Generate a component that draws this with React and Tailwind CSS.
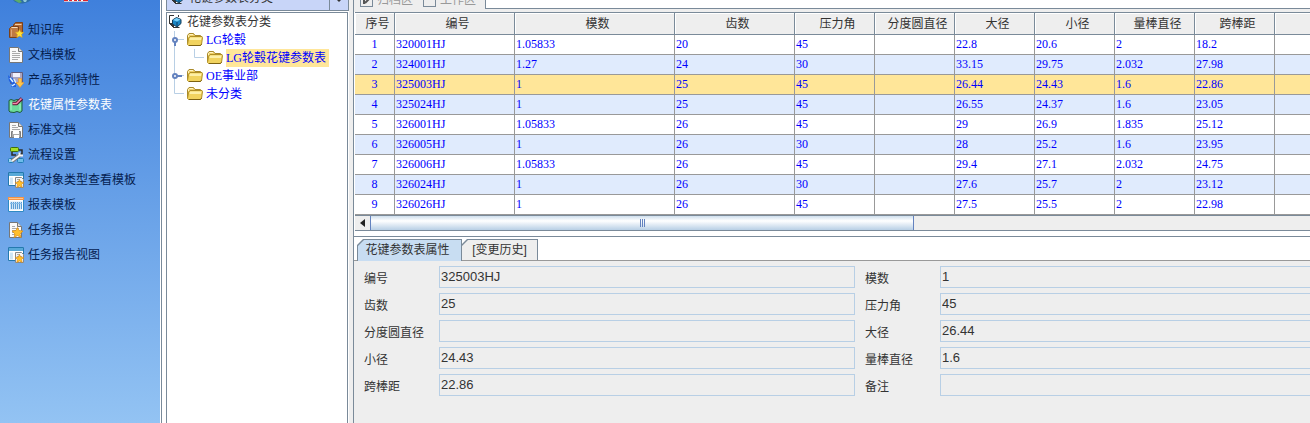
import { clsx } from 'clsx'

const columns = [
  { key: 'no', label: '序号', width: 'w-10' },
  { key: 'code', label: '编号', width: 'w-[120px]' },
  { key: 'module', label: '模数', width: 'w-40' },
  { key: 'teeth', label: '齿数', width: 'w-[120px]' },
  { key: 'angle', label: '压力角', width: 'w-20' },
  { key: 'pitch', label: '分度圆直径', width: 'w-20' },
  { key: 'major', label: '大径', width: 'w-20' },
  { key: 'minor', label: '小径', width: 'w-20' },
  { key: 'pin', label: '量棒直径', width: 'w-20' },
  { key: 'span', label: '跨棒距', width: 'w-20' },
]

const rows = [
  ['1', '320001HJ', '1.05833', '20', '45', '', '22.8', '20.6', '2', '18.2'],
  ['2', '324001HJ', '1.27', '24', '30', '', '33.15', '29.75', '2.032', '27.98'],
  ['3', '325003HJ', '1', '25', '45', '', '26.44', '24.43', '1.6', '22.86'],
  ['4', '325024HJ', '1', '25', '45', '', '26.55', '24.37', '1.6', '23.05'],
  ['5', '326001HJ', '1.05833', '26', '45', '', '29', '26.9', '1.835', '25.12'],
  ['6', '326005HJ', '1', '26', '30', '', '28', '25.2', '1.6', '23.95'],
  ['7', '326006HJ', '1.05833', '26', '45', '', '29.4', '27.1', '2.032', '24.75'],
  ['8', '326024HJ', '1', '26', '30', '', '27.6', '25.7', '2', '23.12'],
  ['9', '326026HJ', '1', '26', '45', '', '27.5', '25.5', '2', '22.98'],
]

const fields = [
  ['编号', '325003HJ'],
  ['模数', '1'],
  ['齿数', '25'],
  ['压力角', '45'],
  ['分度圆直径', ''],
  ['大径', '26.44'],
  ['小径', '24.43'],
  ['量棒直径', '1.6'],
  ['跨棒距', '22.86'],
  ['备注', ''],
]

const starPath = 'M11.5 7.5l1.300 2.600 2.900.300-2.100 2 .600 3-2.700-1.400-2.700 1.400.600-3-2.100-2 2.900-.300z'

function Svg({ children }) {
  return (
    <svg width="16" height="16" viewBox="0 0 16 16" className="shrink-0" aria-hidden="true">
      {children}
    </svg>
  )
}

function BooksIcon() {
  return (
    <Svg>
      <path d="M5.500 3l2-2.500h7V11l-1.500 2H5.500z" fill="#b56a35" stroke="#7c4119" />
      <path d="M7 2.500h6.500" stroke="#f0cfa6" />
      <path d="M1.500 6.500l2-2h7v8.500l-1.500 2.500H1.500z" fill="#c07a42" stroke="#7c4119" />
      <path d="M3.500 5.500h6" stroke="#f6dcbc" />
      <path d="M3.500 7.500v7" stroke="#dfa676" />
      <path d={starPath} fill="#ffe03c" stroke="#dca31b" strokeWidth=".6" />
    </Svg>
  )
}

function PageIcon() {
  return (
    <Svg>
      <path d="M1.500 .5h9l4 4v11h-13z" fill="#fafafa" stroke="#777" />
      <path d="M10.500 .5v4h4" fill="#ddd" stroke="#777" />
      <path d="M4 4.500h4M4 6.500h8M4 8.500h8M4 10.500h8M4 12.500h6" stroke="#aaa" />
    </Svg>
  )
}

function ProductIcon() {
  return (
    <Svg>
      <path d="M2.500 1.500l1-1h11v10l-1 1h-11z" fill="#a9a5c2" stroke="#615d7d" />
      <path d="M5 1h7v4H5z" fill="#f2f0fa" />
      <path d="M0 3l3 3 1-1 4 7v3H3l2-2-4-4z" fill="#1f5fe0" />
      <path d="M2 6l3 4M6 7l2 4M4 14l3-2" stroke="#d9efff" strokeWidth="1.500" />
      <path d="M10.500 6.500h3v4H16l-4 5-4-5h2.500z" fill="#ffc64a" stroke="#e8952b" strokeWidth=".6" />
    </Svg>
  )
}

function SplineIcon() {
  return (
    <Svg>
      <path d="M1 3.500l2-1 3 1 3-1 3 1 2-.5v11l-2 1.500-3-1-3 1-4-.5-1-1z" fill="#6bdc9a" stroke="#1d5b3b" />
      <path d="M3 5v8M12 7v6" stroke="#a5f3c4" />
      <path d="M4.500 6.500h4l5.500-5" stroke="#5a1030" strokeWidth="3.500" fill="none" />
      <path d="M4.500 6.500h4l5-5" stroke="#f58cab" strokeWidth="1.500" fill="none" />
    </Svg>
  )
}

function SavedPageIcon() {
  return (
    <Svg>
      <path d="M1.500 .5h9l4 4v11h-13z" fill="#fafafa" stroke="#777" />
      <path d="M10.500 .5v4h4" fill="#ddd" stroke="#777" />
      <path d="M4 3.500h4M4 5.500h6M4 7.500h8" stroke="#aaa" />
      <path d="M3.500 9.500h9v6h-9z" fill="#a9a9a9" stroke="#7d7d7d" />
      <path d="M5 9h6v3H5zM6 13h5v3H6z" fill="#fff" />
    </Svg>
  )
}

function FlowIcon() {
  return (
    <Svg>
      <path d="M11 3h3v4h-3M4 5v3h4" stroke="#2b2b2b" strokeWidth="1.500" fill="none" />
      <rect x="2.500" y=".5" width="8" height="4" rx="1" fill="#a6df28" stroke="#3f6f0c" />
      <rect x=".5" y="11.500" width="5" height="4" rx="1" fill="#9fd6f5" stroke="#227fb6" />
      <rect x="9.500" y="11.500" width="6" height="4" rx="1" fill="#6dbceb" stroke="#227fb6" />
      <path d="M4 14L12 8" stroke="#777" strokeWidth="4" />
      <path d="M4 14L12 8M11.500 5.500v3h3.500" stroke="#f5f5f5" strokeWidth="2" fill="none" />
    </Svg>
  )
}

function ViewIcon() {
  return (
    <Svg>
      <path d="M.5 .5h15v13H.5z" fill="#fff" stroke="#2479ae" />
      <path d="M1 1h14v3H1z" fill="#58a9d8" />
      <path d="M2 5.500h3v7H2z" fill="#cfe6f5" />
      <path d="M7.500 5.500h6l2 2v8h-8z" fill="#f6f6f6" stroke="#888" />
      <path d="M9 7.500h3M9 9.500h5" stroke="#aaa" />
      <path d={starPath} fill="#ffbf2d" stroke="#dd8b10" strokeWidth=".6" />
    </Svg>
  )
}

function ReportTemplateIcon() {
  return (
    <Svg>
      <path d="M.5 .5h15v14H.5z" fill="#fff" stroke="#2f8ac4" />
      <path d="M0 0h16v3H0z" fill="#f59445" />
      <path d="M1 1.500h14" stroke="#ffc78f" />
      <path d="M2 4.500h12v8H2z" fill="#cfe5f6" />
      <path d="M3.500 5v7M5.500 5v7M7.500 5v7M9.500 5v7M11.500 5v7M13.500 5v7" stroke="#5a9dd5" />
      <path d="M2 6.500h12" stroke="#86bce6" />
    </Svg>
  )
}

function TaskReportIcon() {
  return (
    <Svg>
      <path d="M1.500 .5h8l4 4v11h-12z" fill="#fafafa" stroke="#777" />
      <path d="M9.500 .5v4h4" fill="#ddd" stroke="#777" />
      <path d="M4 4.500h3M4 6.500h7M4 8.500h4M4 10.500h3M4 12.500h3" stroke="#aaa" />
      <path d="M9.500 5.500l1.500 3 4 .5-3 3 1 3.500-3.500-2-3.500 2 1-3.500-3-3 4-.5z" fill="#ffbf2d" stroke="#dd8b10" strokeWidth=".7" />
    </Svg>
  )
}

function RootIcon() {
  return (
    <Svg>
      <path d="M7 1.500H2.500v8l4 4h6" fill="none" stroke="#333" />
      <path d="M3 2h9v11H7L3 9z" fill="#fff" />
      <path d="M2.500 9.500h4v4zM11.500 1v2" fill="#333" stroke="#333" />
      <path d="M5.500 6l4-2.500L14 5.500v4L10 13l-4.500-3z" fill="#1b86c4" stroke="#153a55" />
      <path d="M6 6l3.500-2 4 1.500L10 7.500z" fill="#7ad2fa" />
      <path d="M10 8v4" stroke="#0c3f66" />
    </Svg>
  )
}

function FolderIcon() {
  return (
    <Svg>
      <path d="M.5 11.500V3.500L2 1.500h4.500l1.500 2h5.500v3" fill="#f0d06a" stroke="#a98a2c" />
      <path d="M1.500 5V3.500l1-1H6" fill="none" stroke="#fff5c4" />
      <path d="M.5 12.500l1-6 1.500-2h12l.5 1-1 7-1 1h-12z" fill="#f1d35f" stroke="#b08f26" />
      <path d="M3 5.500h11.500l-.5 2.500H2.500z" fill="#fdf0a8" />
      <path d="M2 13.500h11.500l1-1.500" fill="none" stroke="#7d6212" />
    </Svg>
  )
}

const menu = [
  { label: '知识库', icon: BooksIcon },
  { label: '文档模板', icon: PageIcon },
  { label: '产品系列特性', icon: ProductIcon },
  { label: '花键属性参数表', icon: SplineIcon, active: true },
  { label: '标准文档', icon: SavedPageIcon },
  { label: '流程设置', icon: FlowIcon },
  { label: '按对象类型查看模板', icon: ViewIcon },
  { label: '报表模板', icon: ReportTemplateIcon },
  { label: '任务报告', icon: TaskReportIcon },
  { label: '任务报告视图', icon: ViewIcon },
]

function Sidebar() {
  return (
    <nav className="w-40 shrink-0 bg-linear-to-b from-[#3f80dc] to-[#93c3f3]">
      <div className="flex h-[17px] gap-[33px] pl-[13px]">
        <svg width="18" height="4" aria-hidden="true">
          <path d="M0 0h18l-3 2-5 1.500H7L2 2z" fill="#2d6fa8" />
          <path d="M1 0h6l2 2-3 1z" fill="#5cab6a" />
          <path d="M10 0h4l-1 2h-2z" fill="#8fc8d8" />
        </svg>
        <svg width="24" height="2" aria-hidden="true">
          <path d="M0 0h24v1H0z" fill="#e0242c" />
          <path d="M0 1h24v1H0z" fill="#c9c3d4" />
          <path d="M4 .5h1M8 .5h2M13 .5h1M17 .5h2" stroke="#fff" />
          <path d="M5 .5h1M14 .5h1" stroke="#2c6ab0" />
        </svg>
      </div>
      <ul>
        {menu.map(({ label, icon: Icon, active }) => (
          <li key={label}>
            <a
              href="#"
              className={clsx('flex h-[25px] items-center gap-1 pl-2 text-xs', active ? 'text-white' : 'text-[#04204f]')}
            >
              <Icon />
              <span className="pt-px">{label}</span>
            </a>
          </li>
        ))}
      </ul>
    </nav>
  )
}

function TreeLines({ kind }) {
  return (
    <svg width="20" height="18" className="shrink-0" aria-hidden="true">
      <path d={kind === 'last' ? 'M7.500 0v8.500H17' : 'M7.500 0v18M7.500 8.500H17'} fill="none" stroke="#b8cfe5" />
      {kind === 'open' && <path d="M8 9v6" stroke="#6382bf" strokeWidth="2" />}
      {kind === 'closed' && <path d="M8 9h7" stroke="#6382bf" strokeWidth="2" />}
      {kind !== 'last' && <circle cx="8" cy="9" r="2" fill="#fff" stroke="#6382bf" strokeWidth="2" />}
    </svg>
  )
}

function TreeNode({ kind, label, nested, selected }) {
  return (
    <li className="flex h-[18px] items-center">
      {nested && (
        <svg width="20" height="18" className="shrink-0" aria-hidden="true">
          <path d="M7.500 0v18" stroke="#b8cfe5" />
        </svg>
      )}
      <TreeLines kind={kind} />
      <FolderIcon />
      <span className={clsx('ml-[3px] pr-[3px] text-[#0000ff]', selected && 'bg-[#ffe699]')}>{label}</span>
    </li>
  )
}

function CategoryTree() {
  return (
    <section className="flex w-[183px] shrink-0 flex-col">
      <div className="flex h-[11px] items-end overflow-hidden border-x border-b border-[#7a8a99] bg-[#c8d5f8] text-xs leading-6 text-[#333]">
        <div className="flex grow items-center gap-1 pl-[2px]">
          <RootIcon />
          花键参数表分类
        </div>
        <div className="flex h-6 w-[19px] items-center justify-center border-l border-[#7a8a99]">
          <svg width="8" height="8" aria-hidden="true">
            <path d="M0 4h8L4 8z" fill="#333" />
          </svg>
        </div>
      </div>
      <div className="mt-px mr-px grow border border-b-0 border-[#7a8a99] bg-white font-['Liberation_Serif','Noto_Sans_CJK_SC',serif] text-xs leading-[18px]">
        <div className="flex h-[18px] items-center gap-1 text-[#333]">
          <RootIcon />
          花键参数表分类
        </div>
        <ul>
          <TreeNode kind="open" label="LG轮毂" />
          <TreeNode kind="last" label="LG轮毂花键参数表" nested selected />
          <TreeNode kind="closed" label="OE事业部" />
          <TreeNode kind="last" label="未分类" />
        </ul>
      </div>
    </section>
  )
}

function AreaStrip() {
  return (
    <div className="flex h-[9px] overflow-hidden text-xs leading-4 text-[#999]">
      <div className="flex w-[132px] items-end gap-[10px] border-r border-[#7a8a99] pb-px pl-[6px]">
        <label className="flex items-center gap-1 whitespace-nowrap">
          <span className="grid">
            <input type="checkbox" checked readOnly className="col-start-1 row-start-1 size-[13px] appearance-none border border-[#7a8a99]" />
            <svg width="13" height="13" className="col-start-1 row-start-1" aria-hidden="true">
              <path d="M4 5v5M5 9l5-5" stroke="#555" strokeWidth="2" />
            </svg>
          </span>
          归档区
        </label>
        <label className="flex items-center gap-1 whitespace-nowrap">
          <input type="checkbox" className="size-[13px] appearance-none border border-[#7a8a99]" />
          工作区
        </label>
      </div>
      <div className="grow border-b border-[#7a8a99] bg-white" />
    </div>
  )
}

function ParamTable() {
  return (
    <table className="w-full table-fixed border-separate border-spacing-0 border-t border-[#7a8a99] bg-white text-xs">
      <thead>
        <tr className="h-[22px] bg-[#eee] text-[#333]">
          {columns.map((col) => (
            <th
              key={col.key}
              className={clsx(
                'border-r border-b border-[#7a8a99] p-0 pt-px pl-[6px] text-center font-normal whitespace-nowrap shadow-[inset_1px_1px_0_#fff]',
                col.width
              )}
            >
              {col.label}
            </th>
          ))}
          <th className="border-b border-[#7a8a99] p-0 shadow-[inset_1px_1px_0_#fff]" />
        </tr>
      </thead>
      <tbody className="font-['Liberation_Serif',serif] text-[#0000ff]">
        {rows.map((row, i) => (
          <tr
            key={row[0]}
            className={clsx('h-5', i === 2 ? 'bg-[#ffe699]' : i % 2 === 1 ? 'bg-[#e0ebfd]' : 'bg-white')}
          >
            {row.map((value, j) => (
              <td
                key={columns[j].key}
                className={clsx('border-r border-b border-[#999] px-px pt-0 pb-[2px] leading-4', j === 0 && 'text-center')}
              >
                {value}
              </td>
            ))}
            <td className="border-b border-[#999] p-0" />
          </tr>
        ))}
      </tbody>
    </table>
  )
}

function ScrollBar() {
  return (
    <div className="flex h-4 border-y border-[#7a8a99] bg-[#eee]">
      <button aria-label="向左滚动" className="flex w-[15px] items-center justify-center bg-[#eee]">
        <svg width="5" height="8" aria-hidden="true">
          <path d="M5 0v8L0 4z" fill="#222" />
        </svg>
      </button>
      <div className="flex w-[57%] items-center justify-center gap-px border-x border-[#6382bf] bg-linear-to-b from-[#cfdfee] via-white via-35% to-[#b8cfe5]">
        <span className="h-2 w-px bg-[#6382bf]" />
        <span className="h-2 w-px bg-[#6382bf]" />
        <span className="h-2 w-px bg-[#6382bf]" />
      </div>
    </div>
  )
}

function Tab({ label, selected }) {
  return (
    <button
      role="tab"
      aria-selected={!!selected}
      className={clsx(
        'flex bg-[#7a8a99] p-px pb-0 text-xs text-[#333] [clip-path:polygon(6px_0,100%_0,100%_100%,0_100%,0_6px)]',
        selected ? 'h-[22px] w-[105px]' : '-ml-px h-[21px] w-[77px]'
      )}
    >
      <span
        className={clsx(
          'flex h-full w-full items-center justify-center [clip-path:polygon(6px_0,100%_0,100%_100%,0_100%,0_6px)]',
          selected ? 'bg-[#c8ddf2] pr-1 pb-px' : 'bg-[#eee]'
        )}
      >
        {label}
      </span>
    </button>
  )
}

function DetailPanel() {
  return (
    <section className="mt-[5px] grow overflow-hidden border-t border-[#7a8a99] bg-[#eee]">
      <div role="tablist" className="flex h-6 items-start border-b border-[#999] bg-white pt-[2px] pl-[3px]">
        <Tab label="花键参数表属性" selected />
        <Tab label="[变更历史]" />
      </div>
      <form className="-mr-[46px] grid grid-cols-2 gap-x-[10px] gap-y-[5px] pt-[5px] pl-[10px]">
        {fields.map(([label, value], i) => (
          <div key={label} className="flex h-[22px] items-center">
            <label htmlFor={`field-${i}`} className="w-[75px] shrink-0 pt-1 text-xs text-[#333]">
              {label}
            </label>
            <input
              id={`field-${i}`}
              readOnly
              defaultValue={value}
              className="h-[22px] min-w-0 grow border border-[#b8cfe5] bg-[#eee] px-px pb-[2px] font-['Liberation_Sans',sans-serif] text-[13px] text-[#333]"
            />
          </div>
        ))}
      </form>
    </section>
  )
}

export default function App() {
  return (
    <div className="flex min-h-screen overflow-hidden bg-white font-['Liberation_Sans','Noto_Sans_CJK_SC',sans-serif]">
      <Sidebar />
      <div className="ml-px w-[5px] shrink-0 border-l border-[#7a8a99]" />
      <CategoryTree />
      <div className="w-1 shrink-0 bg-[#eee]" />
      <main className="flex min-w-0 grow flex-col border-l border-[#7a8a99] bg-white">
        <div className="bg-[#eee] pb-[3px]">
          <AreaStrip />
        </div>
        <div className="pl-px">
          <ParamTable />
          <ScrollBar />
        </div>
        <DetailPanel />
      </main>
    </div>
  )
}
